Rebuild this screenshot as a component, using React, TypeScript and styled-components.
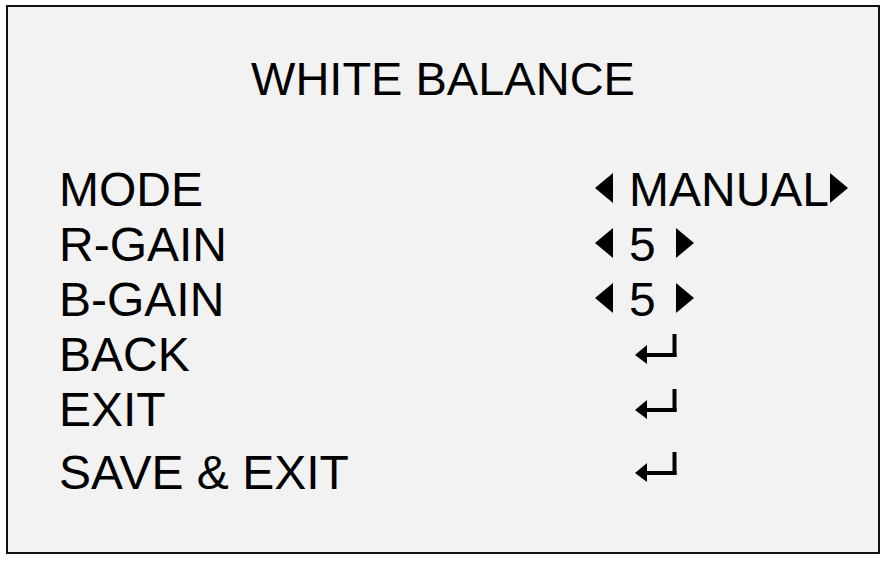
import React from 'react';
import styled, { createGlobalStyle } from 'styled-components';

const PANEL_BG = '#f2f2f2';
const INK = '#000';

const GlobalStyle = createGlobalStyle`
  html, body {
    margin: 0;
    padding: 0;
    background: #fff;
  }
  body {
    font-family: "Liberation Sans", Arial, sans-serif;
  }
`;

const Panel = styled.div`
  box-sizing: border-box;
  width: 874px;
  height: 549px;
  margin: 5px 0 0 6px;
  border: 2px solid #111;
  background: ${PANEL_BG};
  color: ${INK};
  padding: 44px 0 0 51px;
  display: flex;
  flex-direction: column;
`;

const Title = styled.h1`
  margin: 0 0 56px -51px;
  font-size: 47px;
  font-weight: 400;
  line-height: 55px;
  height: 55px;
  text-align: center;
`;

const Menu = styled.div`
  display: flex;
  flex-direction: column;
`;

const Row = styled.div<{ $gapAbove?: number }>`
  display: grid;
  grid-template-columns: 536px auto;
  height: 55px;
  margin-top: ${p => p.$gapAbove ?? 0}px;
  font-size: 48px;
  line-height: 55px;
`;

const Label = styled.span`
  white-space: nowrap;
`;

const Value = styled.div`
  display: flex;
  align-items: center;
  white-space: nowrap;
`;

const Tri = styled.svg<{ $before?: number; $after?: number }>`
  width: 18px;
  height: 30px;
  margin-bottom: 3px;
  margin-left: ${p => p.$before ?? 0}px;
  margin-right: ${p => p.$after ?? 0}px;
  flex: none;
`;

const Enter = styled.svg`
  width: 42px;
  height: 30px;
  margin-left: 40px;
  margin-bottom: 12px;
  flex: none;
`;

const LeftTri = ({ after }: { after?: number }) => (
  <Tri viewBox="0 0 18 30" $after={after}>
    <polygon points="18,0 18,30 0,15" fill={INK} />
  </Tri>
);

const RightTri = ({ before }: { before?: number }) => (
  <Tri viewBox="0 0 18 30" $before={before}>
    <polygon points="0,0 0,30 18,15" fill={INK} />
  </Tri>
);

const EnterIcon = () => (
  <Enter viewBox="0 0 42 30">
    <rect x="37.5" y="0" width="4" height="23" fill={INK} />
    <rect x="10" y="19" width="31.5" height="4" fill={INK} />
    <polygon points="0,21 12,11 12,30" fill={INK} />
  </Enter>
);

type Item =
  | { label: string; kind: 'choice'; value: string; tail: number }
  | { label: string; kind: 'enter'; gap?: number };

const items: Item[] = [
  { label: 'MODE', kind: 'choice', value: 'MANUAL', tail: 1 },
  { label: 'R-GAIN', kind: 'choice', value: '5', tail: 20 },
  { label: 'B-GAIN', kind: 'choice', value: '5', tail: 20 },
  { label: 'BACK', kind: 'enter' },
  { label: 'EXIT', kind: 'enter' },
  { label: 'SAVE & EXIT', kind: 'enter', gap: 8 },
];

export default function App() {
  return (
    <>
      <GlobalStyle />
      <Panel>
        <Title>WHITE BALANCE</Title>
        <Menu>
          {items.map(item => (
            <Row key={item.label} $gapAbove={item.kind === 'enter' ? item.gap : 0}>
              <Label>{item.label}</Label>
              <Value>
                {item.kind === 'choice' ? (
                  <>
                    <LeftTri after={16} />
                    <span>{item.value}</span>
                    <RightTri before={item.tail} />
                  </>
                ) : (
                  <EnterIcon />
                )}
              </Value>
            </Row>
          ))}
        </Menu>
      </Panel>
    </>
  );
}
